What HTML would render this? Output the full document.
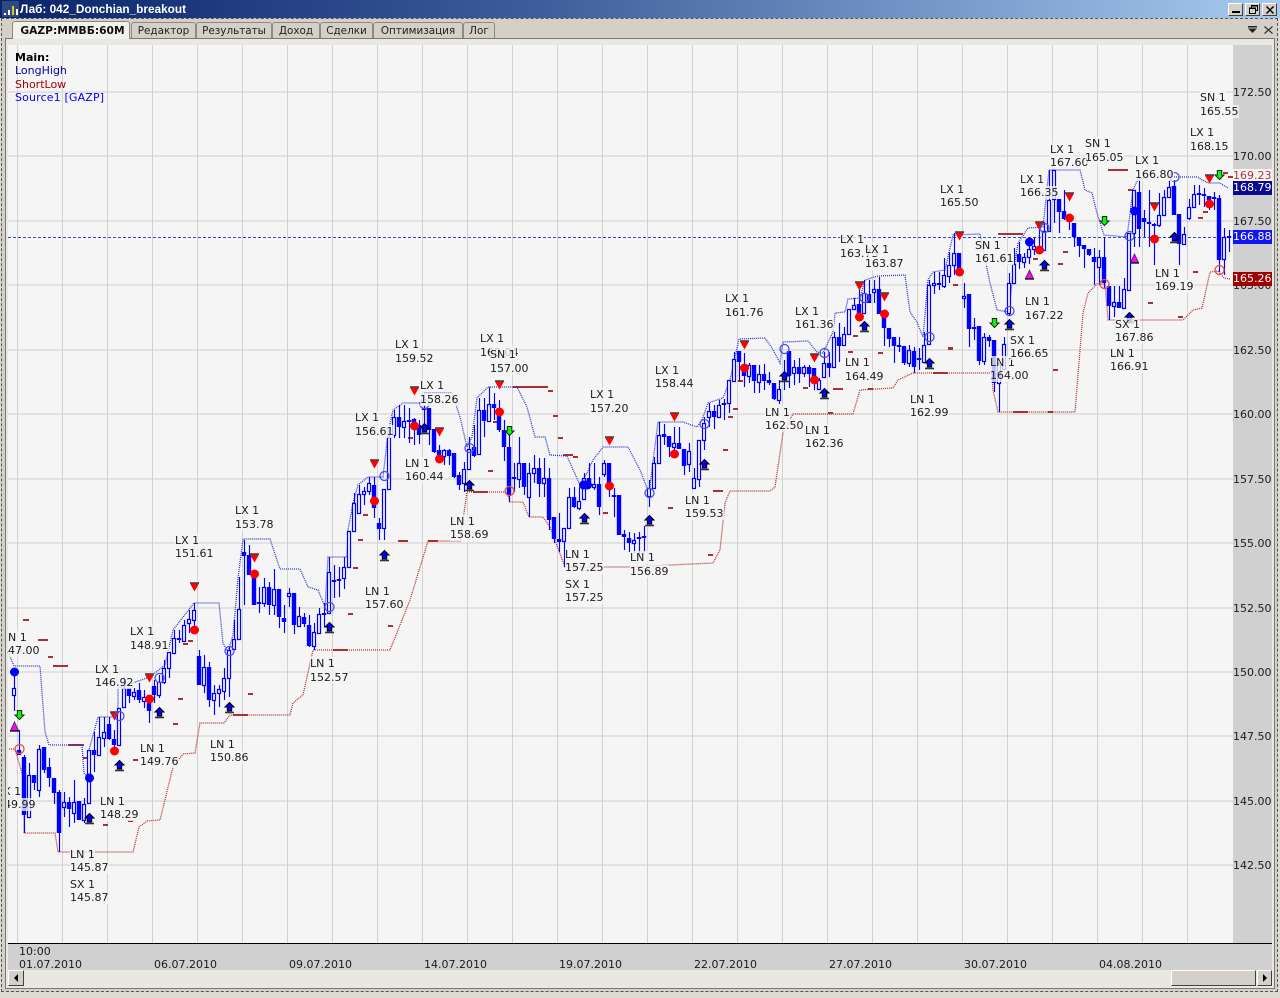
<!DOCTYPE html>
<html><head><meta charset="utf-8"><title>Лаб: 042_Donchian_breakout</title>
<style>
html,body{margin:0;padding:0}
body{position:relative;width:1280px;height:998px;overflow:hidden;background:#dedbd2;font:11px/13px "DejaVu Sans","Noto Sans CJK SC",sans-serif;color:#1c1c1c}
div,span,svg{position:absolute;display:block}
#tb{left:0;top:0;width:1280px;height:18px;background:linear-gradient(90deg,#0a246a 0,#3a5a98 40%,#a6caf0 100%)}
#tt{left:20px;top:2px;color:#fff;font:bold 11.8px/14px "Liberation Sans",sans-serif;white-space:nowrap}
.wb{top:3px;width:15px;height:13px;background:#d4d0c8;border-top:1px solid #fff;border-left:1px solid #fff;border-right:1px solid #404040;border-bottom:1px solid #404040;box-sizing:border-box}
#fr{left:1px;top:18px;width:1277px;height:974px;border:1px dashed #555;box-sizing:border-box;background:#d4d0c8}
#pn{left:5px;top:38px;width:1270px;height:951px;border:1px solid #777;box-sizing:border-box;background:#e8e7e2}
.tab{top:22px;height:16px;line-height:16px;text-align:center;background:#d4d0c8;border:1px solid #8c8a84;border-bottom:0;box-sizing:border-box;border-radius:3px 3px 0 0;white-space:nowrap;color:#222;font-size:10.4px}
#ac{left:12px;width:118px;top:21px;height:18px;line-height:17px;background:#f2f1ec;font-weight:bold;color:#111;z-index:3;border-color:#888;border-bottom:0;font-size:10.7px;padding-left:3px}
#plot{left:8px;top:45px;width:1225px;height:898px;background:#f5f5f5}
#pa{left:1233px;top:45px;width:39px;height:899px;background:#d0d0d0}
#ta{left:8px;top:944px;width:1264px;height:26px;background:#d0d0d0}
#bl{left:8px;top:943px;width:1264px;height:1px;background:#000}
#sb{left:8px;top:970px;width:1264px;height:16px;background:#e8e7e2}
.sbb{top:970px;height:16px;background:#d4d0c8;border-top:1px solid #fff;border-left:1px solid #fff;border-right:1px solid #404040;border-bottom:1px solid #404040;box-sizing:border-box}
#lay{left:8px;top:0;width:1272px;height:998px;overflow:hidden}
.l{white-space:nowrap;height:13px;background:rgba(245,245,245,.78)}
.p{left:1233px;white-space:nowrap;height:13px}
.d{white-space:nowrap;top:958px}
.bx{left:1233px;width:39px;height:14px;line-height:14px;white-space:nowrap;color:#fff}
</style></head><body>
<div id="tb"></div>
<svg style="left:2px;top:1px" width="17" height="16" viewBox="0 0 17 16"><rect width="17" height="16" fill="#2a4a80"/><path d="M2 12h2v2H2zM6 9h2v5H6z" fill="#fff"/><path d="M10 5h2v9h-2z" fill="#f0c020"/><path d="M14 8h2v6h-2z" fill="#fff"/></svg>
<div id="tt">Лаб: 042_Donchian_breakout</div>
<div class="wb" style="left:1228px"><svg style="left:3px;top:7px" width="9" height="3"><rect width="8" height="2" fill="#000"/></svg></div>
<div class="wb" style="left:1245px"><svg style="left:2px;top:1px" width="11" height="10"><path d="M3.500 2.500V.5h6v5h-2M1.500 3.500h6v5h-6z" fill="none" stroke="#000"/><path d="M3 1h7M1 3h7" stroke="#000"/></svg></div>
<div class="wb" style="left:1262px"><svg style="left:3px;top:2px" width="9" height="9"><path d="M.5.500l7 7M7.500.500l-7 7" stroke="#000" stroke-width="1.500"/></svg></div>
<div id="fr"></div>
<div id="pn"></div>
<div class="tab" id="ac">GAZP:ММВБ:60М</div>
<div class="tab" style="left:131px;width:65px">Редактор</div>
<div class="tab" style="left:196px;width:76px">Результаты</div>
<div class="tab" style="left:272px;width:48px">Доход</div>
<div class="tab" style="left:320px;width:53px">Сделки</div>
<div class="tab" style="left:373px;width:90px">Оптимизация</div>
<div class="tab" style="left:463px;width:32px">Лог</div>
<svg style="left:1247px;top:25px" width="28" height="10"><path d="M1 1h9v1.500H1zM1 3.500h9L5.500 8z" fill="#222"/><path d="M17.500 1.500l8 7M25.500 1.500l-8 7" stroke="#333" stroke-width="1.200"/></svg>
<div id="plot"></div><div id="pa"></div><div id="ta"></div><div id="bl"></div><div id="sb"></div>
<div class="sbb" style="left:8px;width:16px"><svg style="left:4px;top:3px" width="6" height="9"><path d="M5 0v8L1 4z" fill="#000"/></svg></div>
<div class="sbb" style="left:1171px;width:85px"></div>
<div class="sbb" style="left:1257px;width:15px"><svg style="left:4px;top:3px" width="6" height="9"><path d="M1 0v8l4-4z" fill="#000"/></svg></div>

<svg style="left:0;top:0" width="1280" height="998" viewBox="0 0 1280 998">
<defs>
<g id="ua"><path d="M0-5.500L4.500-1H2.200V3H-2.200V-1H-4.500Z" fill="#00f" stroke="#000" stroke-width="1"/><path d="M-4.500 4.500h9" stroke="#333" stroke-width="1.600"/></g>
<g id="da"><path d="M-2.200-4.500H2.200V0H4.500L0 4.500-4.500 0H-2.200Z" fill="#0f0" stroke="#222" stroke-width="1"/></g>
<g id="rt"><path d="M-4.500-3.500H4.500L0 4.500Z" fill="#f00"/><path d="M-4.500-4h9" stroke="#444" stroke-width="1.600"/></g>
<g id="mt"><path d="M0-5L4 3.500H-4Z" fill="#f0f" stroke="#333" stroke-width=".8"/><path d="M-4.500 4h9" stroke="#222" stroke-width="1.500"/></g>
<circle id="rd" r="4.500" fill="#f00"/><circle id="bd" r="4.500" fill="#00f"/>
<circle id="bc" r="4.500" fill="none" stroke="#4a50e8" stroke-width="1.300"/><circle id="rc" r="4.500" fill="none" stroke="#f04848" stroke-width="1.300"/>
</defs>
<path stroke="#e2e2e2" stroke-width="2" d="M8 92H1233M8 156H1233M8 221H1233M8 285H1233M8 350H1233M8 414H1233M8 479H1233M8 543H1233M8 608H1233M8 672H1233M8 736H1233M8 801H1233M8 865H1233"/>
<g stroke="#d2d2d2" transform="translate(.5 0)"><path d="M17 45V943M62 45V943M107 45V943M152 45V943M197 45V943M242 45V943M287 45V943M332 45V943M377 45V943M422 45V943M467 45V943M512 45V943M557 45V943M602 45V943M647 45V943M692 45V943M737 45V943M782 45V943M827 45V943M872 45V943M917 45V943M962 45V943M1007 45V943M1052 45V943M1097 45V943M1142 45V943M1187 45V943"/></g>
<path d="M8 237.500H1233" stroke="#3a44c8" stroke-width="1" stroke-dasharray="3 2"/>
<path fill="none" stroke="#a83030" stroke-width="2" d="M23 620h6M38 640h10M48 657h5M53 666h15M68 745h16M83 758h5M103 825h5M128 821h5M133 760h5M173 724h5M178 699h5M183 644h5M188 641h5M248 694h5M233 715h15M333 650h15M348 614h5M353 568h5M358 540h5M363 515h5M388 626h5M398 541h10M428 541h10M408 438h5M473 492h15M488 471h5M493 422h5M513 387h35M548 391h5M553 416h5M558 438h5M563 455h10M573 457h5M603 513h5M668 508h5M708 555h5M713 491h10M723 450h5M728 417h5M733 409h5M738 381h5M803 388h5M833 389h10M828 413h5M848 352h5M853 336h5M868 389h5M878 353h5M933 373h15M948 348h5M953 285h5M998 234h25M1013 412h15M948 349h5M1048 412h5M1053 370h5M1063 252h5M1058 264h5M1033 259h5M1108 170h20M1128 190h5M1148 303h5M1178 317h5M1193 272h5M1198 218h5M1203 212h5M1223 173h5M1228 177h5"/>
<polyline fill="none" stroke="#2a35c8" stroke-width="1.300" stroke-dasharray="1 1" points="8,652 14,666 40,666 45,732 49,745 82,745 84,773 89,778 89,750 98,717 118,717 118,688 150,677 165,665 173,630 194,603 219,603 223,643 228,652 233,635 238,578 243,539 270,539 280,569 300,569 308,587 318,590 325,607 328,557 347,557 348,530 353,503 358,485 368,477 383,477 388,433 393,410 403,403 423,403 425,393 452,393 460,417 467,447 472,437 477,398 488,387 517,387 527,407 535,437 545,437 550,455 567,456 580,485 587,473 593,460 603,447 628,447 640,470 649,493 658,422 683,422 697,427 702,420 708,403 723,398 730,380 739,339 765,338 772,348 780,363 783,342 808,341 817,352 823,353 833,332 835,313 845,312 848,299 860,298 865,280 878,276 905,275 910,312 917,322 923,337 928,280 933,272 945,270 953,235 980,234 990,283 997,310 1009,312 1013,273 1018,243 1028,228 1043,227 1049,170 1080,170 1085,190 1092,193 1097,213 1104,235 1127,237 1133,190 1138,179 1146,178"/>
<polyline fill="none" stroke="#2a35c8" stroke-width="1.300" stroke-dasharray="1 1" points="1168,177 1197,177 1208,183 1220,183 1228,188"/>
<polyline fill="none" stroke="#b03030" stroke-width="1.300" stroke-dasharray="1 1" points="9,749 15,749 24,780 24,833 55,833 58,852 133,852 139,827 147,821 160,820 173,767 183,754 195,753 200,723 224,723 230,715 290,715 293,703 303,695 313,650 390,650 410,600 428,541 460,541 467,492 507,492 510,502 523,502 529,517 543,517 550,527 565,567 630,567 713,563 720,550 725,503 730,491 770,491 775,487 783,433 793,414 853,414 860,390 893,388 898,380 913,373 992,373 993,390 998,412 1075,412 1083,313 1088,293 1097,284 1105,284 1108,320 1183,320 1193,310 1202,308 1210,272 1218,271 1224,278 1230,279"/>
<path fill="none" stroke="#00f" stroke-width="1.150" transform="translate(.5 0)" d="M14 672V711M19 730V755M24 755V833M29 763V817M34 775V790M39 745V797M44 747V773M49 758V787M54 778V804M59 790V852M64 792V817M69 797V827M74 780V823M79 801V820M84 798V823M89 750V803M94 732V772M99 717V755M104 717V747M109 717V740M114 730V755M119 708V745M124 677V707M129 688V703M134 688V700M139 683V703M144 690V708M149 697V723M154 680V703M159 675V698M164 660V684M169 652V678M174 630V653M179 630V643M184 620V642M189 610V633M194 603V628M199 650V685M204 655V693M209 662V707M214 685V715M219 685V707M224 668V700M229 647V697M234 620V650M239 577V639M244 540V605M249 545V575M254 570V605M259 587V613M264 578V607M269 582V615M274 569V615M279 589V628M284 605V633M289 588V607M294 593V634M299 607V626M304 613V627M309 615V647M314 623V650M319 608V634M324 603V627M329 557V613M334 565V598M339 567V597M344 557V589M349 531V567M354 493V531M359 485V513M364 487V505M369 477V495M374 477V518M379 518V540M384 489V540M389 430V489M394 410V438M399 405V438M404 405V438M409 408V443M414 418V445M419 420V444M424 405V430M429 408V445M434 429V453M439 445V462M444 449V465M449 449V465M454 453V478M459 472V490M464 462V492M469 437V470M474 425V457M479 398V454M484 398V437M489 387V422M494 393V420M499 400V432M504 420V461M509 430V502M514 463V492M519 437V488M524 463V495M529 463V517M534 455V483M539 458V497M544 458V497M549 468V530M554 517V543M559 513V552M564 528V567M569 488V528M574 487V508M579 487V510M584 473V500M589 463V485M594 463V490M599 477V515M604 460V477M609 463V497M614 488V517M619 495V535M624 530V550M629 532V552M634 533V553M639 532V557M644 526V552M649 480V507M654 457V488M659 422V463M664 424V445M669 436V457M674 427V453M679 427V449M684 449V475M689 443V472M694 468V488M699 440V487M704 417V450M709 403V427M714 405V429M719 400V417M724 399V420M729 380V413M734 352V381M739 351V381M744 353V387M749 363V383M754 365V393M759 365V393M764 364V390M769 372V385M774 383V400M779 380V404M784 360V390M789 351V388M794 360V385M799 358V383M804 365V377M809 365V387M814 368V390M819 378V389M824 352V378M829 352V377M834 332V368M839 323V362M844 327V346M849 309V335M854 298V310M859 288V318M864 280V313M869 280V303M874 280V303M879 277V314M884 314V346M889 328V347M894 337V363M899 337V352M904 346V365M909 345V367M914 347V373M919 348V370M924 332V363M929 280V344M934 272V294M939 272V290M944 258V288M949 252V283M954 233V275M959 253V272M964 283V308M969 294V347M974 318V340M979 326V365M984 333V365M989 335V347M994 340V392M999 363V412M1004 337V370M1009 273V315M1014 248V284M1019 242V269M1024 253V268M1029 240V264M1034 237V255M1039 223V253M1044 222V251M1049 170V231M1054 170V223M1059 199V233M1064 190V220M1069 215V230M1074 223V247M1079 237V257M1084 245V268M1089 249V256M1094 248V285M1099 250V285M1104 237V288M1109 286V320M1114 286V317M1119 286V308M1124 278V308M1129 233V291M1134 190V247M1139 180V247M1144 210V237M1149 190V247M1154 223V265M1159 193V227M1164 190V216M1169 180V198M1174 180V215M1179 214V265M1184 227V245M1189 199V220M1194 185V208M1199 185V205M1204 188V207M1209 196V210M1214 192V210M1219 195V272M1224 228V275M1229 230V252"/>
<path fill="none" stroke="#00f" stroke-width="4.400" d="M19 750V755M24 757V815M34 775V783M44 747V770M49 767V778M54 778V793M59 792V833M69 802V809M79 801V820M94 750V755M109 724V739M114 739V745M129 688V696M139 690V700M149 703V711M154 686V695M179 638V640M199 656V685M209 667V700M244 552V556M249 555V575M254 575V605M259 602V604M269 587V605M279 589V617M284 618V622M294 593V625M304 617V624M309 625V646M324 613V615M334 580V582M339 579V581M374 485V508M379 523V529M399 417V427M409 420V422M414 419V428M419 425V435M424 408V410M429 408V430M434 429V452M439 450V457M449 450V456M454 453V477M459 475V485M474 447V456M484 410V421M494 404V408M499 408V430M504 430V447M509 447V495M514 477V479M524 463V487M539 468V484M549 478V520M554 517V539M559 539V542M574 497V507M589 478V484M599 484V507M609 463V488M614 495V497M619 495V535M624 534V537M629 538V543M639 537V539M644 536V538M664 434V437M669 436V447M679 443V449M684 449V466M714 411V417M724 403V405M739 351V362M744 367V376M754 365V381M764 374V381M769 380V383M774 383V399M784 374V376M789 351V376M799 367V374M809 367V374M814 368V380M829 363V368M839 337V346M859 304V314M869 294V303M879 289V314M884 314V328M889 328V339M894 337V346M899 345V347M904 346V363M914 351V367M919 358V360M939 283V285M959 253V272M969 294V329M974 327V329M979 326V361M989 337V341M994 340V383M1019 254V262M1039 250V253M1059 199V212M1064 211V219M1069 215V222M1074 223V237M1079 237V246M1084 245V249M1089 249V255M1094 257V262M1104 257V283M1109 286V306M1119 302V308M1139 192V229M1144 218V222M1149 222V224M1154 224V226M1174 186V215M1179 214V244M1199 193V195M1204 194V196M1209 196V200M1214 197V199M1219 198V260M1229 236V238"/>
<path fill="#f5f5f5" stroke="#00f" stroke-width="1.200" transform="translate(-1.500 .5)" d="M14 688h3v7h-3zM29 775h3v42h-3zM39 749h3v41h-3zM64 802h3v5h-3zM74 802h3v11h-3zM84 804h3v16h-3zM89 750h3v53h-3zM99 737h3v18h-3zM104 732h3v6h-3zM119 708h3v37h-3zM124 688h3v19h-3zM134 692h3v4h-3zM144 697h3v4h-3zM159 682h3v13h-3zM164 668h3v14h-3zM169 652h3v16h-3zM174 638h3v15h-3zM184 625h3v16h-3zM189 619h3v4h-3zM194 610h3v10h-3zM204 667h3v18h-3zM214 693h3v7h-3zM219 689h3v4h-3zM224 678h3v13h-3zM229 650h3v28h-3zM234 639h3v10h-3zM239 609h3v30h-3zM264 587h3v16h-3zM274 589h3v16h-3zM289 593h3v3h-3zM299 616h3v10h-3zM314 632h3v14h-3zM319 614h3v19h-3zM329 572h3v41h-3zM344 567h3v11h-3zM349 531h3v36h-3zM354 503h3v28h-3zM359 494h3v19h-3zM364 491h3v3h-3zM369 483h3v8h-3zM384 489h3v39h-3zM389 437h3v52h-3zM394 417h3v18h-3zM404 421h3v6h-3zM444 450h3v6h-3zM464 469h3v14h-3zM469 449h3v20h-3zM479 410h3v44h-3zM489 404h3v17h-3zM519 463h3v16h-3zM529 473h3v24h-3zM534 468h3v5h-3zM544 478h3v5h-3zM564 528h3v13h-3zM569 497h3v31h-3zM579 501h3v7h-3zM584 478h3v21h-3zM594 484h3v3h-3zM604 463h3v11h-3zM634 540h3v3h-3zM649 488h3v8h-3zM654 463h3v25h-3zM659 435h3v28h-3zM674 443h3v4h-3zM689 451h3v13h-3zM694 478h3v10h-3zM699 440h3v39h-3zM704 423h3v17h-3zM709 411h3v6h-3zM719 405h3v12h-3zM729 380h3v23h-3zM734 359h3v22h-3zM749 365h3v11h-3zM759 374h3v8h-3zM779 389h3v11h-3zM794 367h3v6h-3zM804 367h3v6h-3zM819 380h3v9h-3zM824 363h3v14h-3zM834 337h3v30h-3zM844 334h3v11h-3zM849 309h3v25h-3zM854 305h3v4h-3zM864 293h3v20h-3zM874 289h3v3h-3zM909 350h3v13h-3zM924 345h3v17h-3zM929 285h3v59h-3zM934 283h3v2h-3zM944 275h3v11h-3zM949 265h3v11h-3zM954 253h3v12h-3zM964 296h3v2h-3zM984 337h3v24h-3zM999 363h3v20h-3zM1004 344h3v25h-3zM1009 283h3v30h-3zM1014 264h3v19h-3zM1024 257h3v5h-3zM1029 249h3v8h-3zM1034 246h3v3h-3zM1044 231h3v19h-3zM1049 200h3v31h-3zM1054 170h3v29h-3zM1099 257h3v10h-3zM1114 302h3v4h-3zM1124 289h3v19h-3zM1129 233h3v57h-3zM1134 190h3v43h-3zM1159 215h3v10h-3zM1164 197h3v18h-3zM1169 187h3v10h-3zM1184 234h3v10h-3zM1189 207h3v11h-3zM1194 194h3v13h-3zM1224 237h3v22h-3z"/>
<g transform="translate(.5 0)">
<use href="#ua" x="89" y="819"/><use href="#ua" x="119" y="766"/><use href="#ua" x="159" y="713"/><use href="#ua" x="229" y="708"/><use href="#ua" x="329" y="628"/><use href="#ua" x="384" y="556"/><use href="#ua" x="424" y="429"/><use href="#ua" x="469" y="486"/><use href="#ua" x="584" y="519"/><use href="#ua" x="649" y="521"/><use href="#ua" x="704" y="465"/><use href="#ua" x="784" y="377"/><use href="#ua" x="824" y="394"/><use href="#ua" x="864" y="327"/><use href="#ua" x="929" y="364"/><use href="#ua" x="1009" y="325"/><use href="#ua" x="1044" y="266"/><use href="#ua" x="1129" y="318"/><use href="#ua" x="1174" y="238"/>
<use href="#da" x="19" y="715"/><use href="#da" x="509" y="431"/><use href="#da" x="994" y="323"/><use href="#da" x="1104" y="221"/><use href="#da" x="1219" y="175"/>
<use href="#mt" x="14" y="727"/><use href="#mt" x="1029" y="275"/><use href="#mt" x="1134" y="259"/>
<use href="#rt" x="114" y="716"/><use href="#rt" x="149" y="678"/><use href="#rt" x="194" y="587"/><use href="#rt" x="254" y="558"/><use href="#rt" x="374" y="464"/><use href="#rt" x="414" y="391"/><use href="#rt" x="439" y="432"/><use href="#rt" x="499" y="385"/><use href="#rt" x="609" y="441"/><use href="#rt" x="674" y="417"/><use href="#rt" x="744" y="345"/><use href="#rt" x="814" y="358"/><use href="#rt" x="859" y="286"/><use href="#rt" x="884" y="297"/><use href="#rt" x="959" y="236"/><use href="#rt" x="1039" y="226"/><use href="#rt" x="1069" y="197"/><use href="#rt" x="1154" y="207"/><use href="#rt" x="1209" y="179"/>
<use href="#rd" x="114" y="751"/><use href="#rd" x="149" y="699"/><use href="#rd" x="194" y="630"/><use href="#rd" x="254" y="574"/><use href="#rd" x="374" y="501"/><use href="#rd" x="414" y="426"/><use href="#rd" x="439" y="459"/><use href="#rd" x="499" y="412"/><use href="#rd" x="609" y="486"/><use href="#rd" x="674" y="454"/><use href="#rd" x="744" y="368"/><use href="#rd" x="814" y="380"/><use href="#rd" x="859" y="317"/><use href="#rd" x="884" y="314"/><use href="#rd" x="959" y="272"/><use href="#rd" x="1039" y="250"/><use href="#rd" x="1069" y="218"/><use href="#rd" x="1154" y="239"/><use href="#rd" x="1209" y="204"/>
<use href="#bd" x="14" y="672"/><use href="#bd" x="89" y="778"/><use href="#bd" x="583" y="485"/><use href="#bd" x="587" y="485"/><use href="#bd" x="1029" y="242"/><use href="#bd" x="1134" y="211"/>
<use href="#bc" x="119" y="716"/><use href="#bc" x="159" y="678"/><use href="#bc" x="229" y="651"/><use href="#bc" x="329" y="607"/><use href="#bc" x="384" y="476"/><use href="#bc" x="424" y="404"/><use href="#bc" x="469" y="448"/><use href="#bc" x="649" y="493"/><use href="#bc" x="704" y="424"/><use href="#bc" x="784" y="349"/><use href="#bc" x="824" y="353"/><use href="#bc" x="864" y="298"/><use href="#bc" x="929" y="337"/><use href="#bc" x="1009" y="311"/><use href="#bc" x="1044" y="228"/><use href="#bc" x="1129" y="236"/><use href="#bc" x="1174" y="177"/>
<use href="#rc" x="19" y="749"/><use href="#rc" x="509" y="491"/><use href="#rc" x="1104" y="284"/><use href="#rc" x="1219" y="270"/>
</g>
</svg>

<div style="left:15px;top:51px;font-weight:bold;color:#000">Main:</div>
<div style="left:15px;top:64px;color:#0000a8">LongHigh</div>
<div style="left:15px;top:78px;color:#a80000">ShortLow</div>
<div style="left:15px;top:91px;color:#0000ff;letter-spacing:.15px">Source1 [GAZP]</div>

<div class="p" style="top:86px">172.50</div><div class="p" style="top:150px">170.00</div><div class="p" style="top:215px">167.50</div><div class="p" style="top:279px">165.00</div><div class="p" style="top:344px">162.50</div><div class="p" style="top:408px">160.00</div><div class="p" style="top:473px">157.50</div><div class="p" style="top:537px">155.00</div><div class="p" style="top:602px">152.50</div><div class="p" style="top:666px">150.00</div><div class="p" style="top:730px">147.50</div><div class="p" style="top:795px">145.00</div><div class="p" style="top:859px">142.50</div>
<div class="bx" style="top:169px;background:#f5f5f5;color:#a83838">169.23</div>
<div class="bx" style="top:181px;background:#0a0a90">168.79</div>
<div class="bx" style="top:230px;background:#1414f0">166.88</div>
<div class="bx" style="top:272px;background:#a00000">165.26</div>

<div class="d" style="left:19px;top:945px">10:00</div>
<div class="d" style="left:19px">01.07.2010</div><div class="d" style="left:154px">06.07.2010</div><div class="d" style="left:289px">09.07.2010</div><div class="d" style="left:424px">14.07.2010</div><div class="d" style="left:559px">19.07.2010</div><div class="d" style="left:694px">22.07.2010</div><div class="d" style="left:829px">27.07.2010</div><div class="d" style="left:964px">30.07.2010</div><div class="d" style="left:1099px">04.08.2010</div>

<div id="lay" style="left:8px;width:1240px">
<div class="l" style="left:-7px;top:631px">SN 1</div><div class="l" style="left:-7px;top:644px">147.00</div>
<div class="l" style="left:-11px;top:785px">LX 1</div><div class="l" style="left:-11px;top:798px">149.99</div>
<div class="l" style="left:87px;top:663px">LX 1</div><div class="l" style="left:87px;top:676px">146.92</div>
<div class="l" style="left:122px;top:625px">LX 1</div><div class="l" style="left:122px;top:639px">148.91</div>
<div class="l" style="left:167px;top:534px">LX 1</div><div class="l" style="left:167px;top:547px">151.61</div>
<div class="l" style="left:227px;top:504px">LX 1</div><div class="l" style="left:227px;top:518px">153.78</div>
<div class="l" style="left:92px;top:795px">LN 1</div><div class="l" style="left:92px;top:808px">148.29</div>
<div class="l" style="left:132px;top:742px">LN 1</div><div class="l" style="left:132px;top:755px">149.76</div>
<div class="l" style="left:202px;top:738px">LN 1</div><div class="l" style="left:202px;top:751px">150.86</div>
<div class="l" style="left:62px;top:848px">LN 1</div><div class="l" style="left:62px;top:861px">145.87</div>
<div class="l" style="left:62px;top:878px">SX 1</div><div class="l" style="left:62px;top:891px">145.87</div>
<div class="l" style="left:302px;top:657px">LN 1</div><div class="l" style="left:302px;top:671px">152.57</div>
<div class="l" style="left:357px;top:585px">LN 1</div><div class="l" style="left:357px;top:598px">157.60</div>
<div class="l" style="left:347px;top:411px">LX 1</div><div class="l" style="left:347px;top:425px">156.61</div>
<div class="l" style="left:387px;top:338px">LX 1</div><div class="l" style="left:387px;top:352px">159.52</div>
<div class="l" style="left:412px;top:379px">LX 1</div><div class="l" style="left:412px;top:393px">158.26</div>
<div class="l" style="left:397px;top:457px">LN 1</div><div class="l" style="left:397px;top:470px">160.44</div>
<div class="l" style="left:442px;top:515px">LN 1</div><div class="l" style="left:442px;top:528px">158.69</div>
<div class="l" style="left:472px;top:332px">LX 1</div><div class="l" style="left:472px;top:346px">160.04</div>
<div class="l" style="left:482px;top:348px">SN 1</div><div class="l" style="left:482px;top:362px">157.00</div>
<div class="l" style="left:582px;top:388px">LX 1</div><div class="l" style="left:582px;top:402px">157.20</div>
<div class="l" style="left:647px;top:364px">LX 1</div><div class="l" style="left:647px;top:377px">158.44</div>
<div class="l" style="left:557px;top:548px">LN 1</div><div class="l" style="left:557px;top:561px">157.25</div>
<div class="l" style="left:557px;top:578px">SX 1</div><div class="l" style="left:557px;top:591px">157.25</div>
<div class="l" style="left:622px;top:551px">LN 1</div><div class="l" style="left:622px;top:565px">156.89</div>
<div class="l" style="left:677px;top:494px">LN 1</div><div class="l" style="left:677px;top:507px">159.53</div>
<div class="l" style="left:717px;top:292px">LX 1</div><div class="l" style="left:717px;top:306px">161.76</div>
<div class="l" style="left:787px;top:305px">LX 1</div><div class="l" style="left:787px;top:318px">161.36</div>
<div class="l" style="left:832px;top:233px">LX 1</div><div class="l" style="left:832px;top:247px">163.73</div>
<div class="l" style="left:857px;top:243px">LX 1</div><div class="l" style="left:857px;top:257px">163.87</div>
<div class="l" style="left:757px;top:406px">LN 1</div><div class="l" style="left:757px;top:419px">162.50</div>
<div class="l" style="left:797px;top:424px">LN 1</div><div class="l" style="left:797px;top:437px">162.36</div>
<div class="l" style="left:837px;top:356px">LN 1</div><div class="l" style="left:837px;top:370px">164.49</div>
<div class="l" style="left:902px;top:393px">LN 1</div><div class="l" style="left:902px;top:406px">162.99</div>
<div class="l" style="left:932px;top:183px">LX 1</div><div class="l" style="left:932px;top:196px">165.50</div>
<div class="l" style="left:967px;top:239px">SN 1</div><div class="l" style="left:967px;top:252px">161.61</div>
<div class="l" style="left:982px;top:356px">LN 1</div><div class="l" style="left:982px;top:369px">164.00</div>
<div class="l" style="left:1002px;top:334px">SX 1</div><div class="l" style="left:1002px;top:347px">166.65</div>
<div class="l" style="left:1017px;top:295px">LN 1</div><div class="l" style="left:1017px;top:309px">167.22</div>
<div class="l" style="left:1012px;top:173px">LX 1</div><div class="l" style="left:1012px;top:186px">166.35</div>
<div class="l" style="left:1042px;top:143px">LX 1</div><div class="l" style="left:1042px;top:156px">167.60</div>
<div class="l" style="left:1077px;top:137px">SN 1</div><div class="l" style="left:1077px;top:151px">165.05</div>
<div class="l" style="left:1127px;top:154px">LX 1</div><div class="l" style="left:1127px;top:168px">166.80</div>
<div class="l" style="left:1107px;top:318px">SX 1</div><div class="l" style="left:1107px;top:331px">167.86</div>
<div class="l" style="left:1102px;top:347px">LN 1</div><div class="l" style="left:1102px;top:360px">166.91</div>
<div class="l" style="left:1147px;top:267px">LN 1</div><div class="l" style="left:1147px;top:280px">169.19</div>
<div class="l" style="left:1192px;top:91px">SN 1</div><div class="l" style="left:1192px;top:105px">165.55</div>
<div class="l" style="left:1182px;top:126px">LX 1</div><div class="l" style="left:1182px;top:140px">168.15</div>
</div>
</body></html>
